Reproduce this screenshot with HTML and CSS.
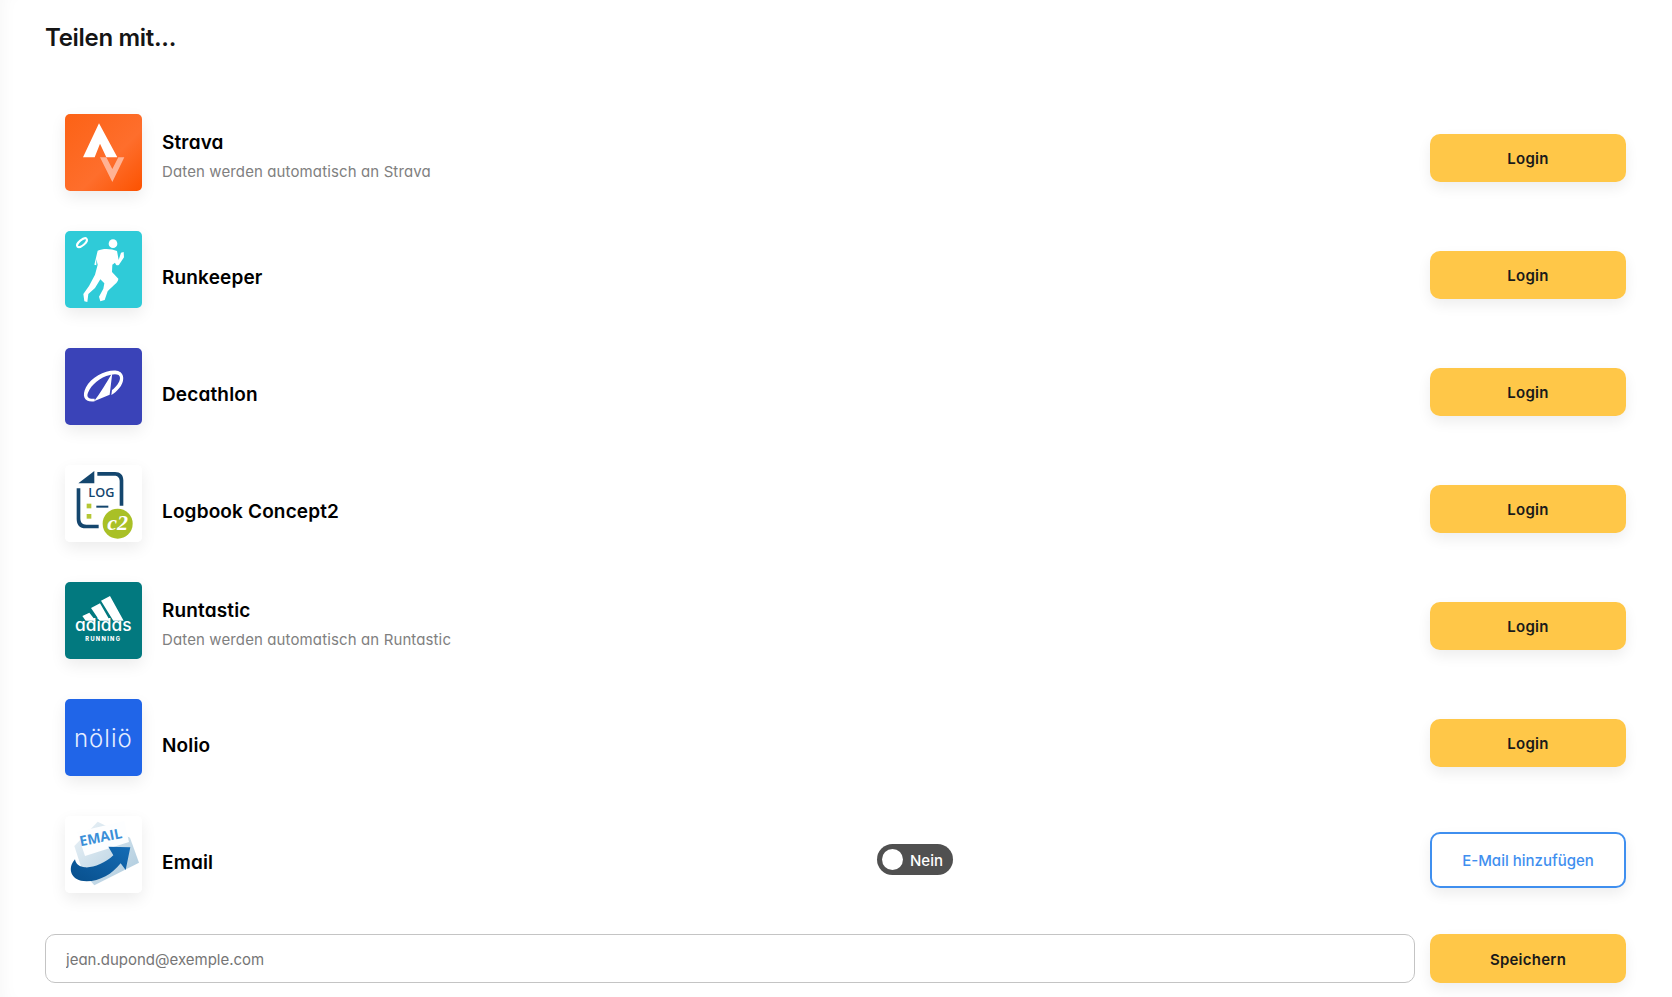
FILE: index.html
```html
<!DOCTYPE html>
<html lang="de">
<head>
<meta charset="utf-8">
<title>Teilen mit...</title>
<link rel="stylesheet" href="styles.css">
</head>
<body>
<main class="page">
  <h1 class="title">Teilen mit...</h1>
  <ul class="list">
    <li class="row">
      <div class="logo">
        <svg viewBox="30 27 231 231"><defs><linearGradient id="sg" x1="0" y1="0" x2="1" y2="1"><stop offset="0" stop-color="#fc6215"/><stop offset=".6" stop-color="#fe6e2c"/><stop offset="1" stop-color="#fc5200"/></linearGradient></defs><rect x="30" y="27" width="231" height="231" fill="url(#sg)"/><path d="M132 55L84 157H119L135 116L154 157H187Z" fill="#fff"/><path d="M135 157H154L172 192L190 157H208L172 231Z" fill="#ffb394"/></svg>
      </div>
      <div class="info"><div class="name">Strava</div><div class="desc">Daten werden automatisch an Strava</div></div>
      <button class="btn">Login</button>
    </li>
    <li class="row">
      <div class="logo">
        <svg viewBox="30 27 231 231"><rect x="30" y="27" width="231" height="231" fill="#2fcbd8"/><ellipse cx="81" cy="62" rx="18" ry="8" fill="none" stroke="#fff" stroke-width="6" transform="rotate(-40 81 62)"/><circle cx="174" cy="65" r="13" fill="#fff"/><path d="M128 86C145 78 170 80 186 87L191 114L198 92L206 90L207 106L192 128C187 133 182 128 180 122L172 128L171 150L190 170C190 182 174 190 158 208L149 234L136 238L132 224L145 200L148 184L136 172L120 198L100 216L97 240L88 238L85 216L102 192L120 158L128 128L124 112L124 130L118 128Z" fill="#fff"/></svg>
      </div>
      <div class="info info-single"><div class="name">Runkeeper</div></div>
      <button class="btn">Login</button>
    </li>
    <li class="row">
      <div class="logo">
        <svg viewBox="45 54 231 231"><rect x="45" y="54" width="231" height="231" fill="#3a43b8"/><path d="M134 214C104 218 94 200 108 172C124 140 170 118 200 122C226 126 224 156 208 174C200 184 192 191 184 195L186 180C198 172 210 156 210 144C210 132 196 131 180 135C150 142 124 164 114 188C108 202 118 208 134 206Z" fill="#fff"/><path d="M187 128L179 194L132 214C150 190 170 158 187 128Z" fill="#fff"/></svg>
      </div>
      <div class="info info-single"><div class="name">Decathlon</div></div>
      <button class="btn">Login</button>
    </li>
    <li class="row">
      <div class="logo">
        <svg viewBox="30 30 231 231"><rect x="30" y="30" width="231" height="231" fill="#fff"/><path d="M118 48V85H70Z" fill="#14466e"/><path d="M127 51H180C196 51 205 60 205 76V152H194V78C194 68 188 62 178 62H127ZM65 100H76V190C76 203 82 209 94 209H131V220H92C74 220 65 210 65 192Z" fill="#14466e"/><text x="100" y="125" class="log-text">LOG</text><rect x="95" y="146" width="14" height="14" fill="#b5c735"/><rect x="95" y="177" width="14" height="14" fill="#b5c735"/><rect x="124" y="152" width="36" height="6" fill="#14466e"/><circle cx="188" cy="206" r="45" fill="#a9c026"/><text x="188" y="226" class="c2-text">c2</text></svg>
      </div>
      <div class="info info-single"><div class="name">Logbook Concept2</div></div>
      <button class="btn">Login</button>
    </li>
    <li class="row">
      <div class="logo">
        <svg viewBox="30 30 231 231"><rect x="30" y="30" width="231" height="231" fill="#02797f"/><path d="M82 132L103 122L122 146H92ZM108 108L135 94L165 146H134ZM138 86L165 72L206 146H175Z" fill="#fff"/><text x="145" y="178" class="adidas-text">adidas</text><text x="145" y="208" class="running-text">RUNNING</text></svg>
      </div>
      <div class="info"><div class="name">Runtastic</div><div class="desc">Daten werden automatisch an Runtastic</div></div>
      <button class="btn">Login</button>
    </li>
    <li class="row">
      <div class="logo">
        <svg viewBox="45 57 231 231"><rect x="45" y="57" width="231" height="231" fill="#2065e8"/><text x="160" y="200" class="nolio-text">nöliö</text></svg>
      </div>
      <div class="info info-single"><div class="name">Nolio</div></div>
      <button class="btn">Login</button>
    </li>
    <li class="row">
      <div class="logo">
        <svg viewBox="30 30 231 231"><defs><linearGradient id="eg" x1="0" y1="0" x2="1" y2="1"><stop offset="0" stop-color="#eef4f8"/><stop offset="1" stop-color="#a9c8dc"/></linearGradient><linearGradient id="ag" x1="0" y1="1" x2="1" y2="0"><stop offset="0" stop-color="#084f8c"/><stop offset="1" stop-color="#156cb5"/></linearGradient></defs><rect x="30" y="30" width="231" height="231" fill="#fff"/><path d="M58 120L128 47L225 95L252 170L118 238L84 200Z" fill="url(#eg)"/><path d="M66 78L208 45L222 108L90 150Z" fill="#fdfeff"/><text x="140" y="108" class="email-text" transform="rotate(-11 140 108)">EMAIL</text><path d="M60 160C36 186 46 226 95 226C135 226 172 204 197 172L212 192L226 124L160 122L175 148C150 172 115 186 90 184C75 183 62 175 60 160Z" fill="url(#ag)"/></svg>
      </div>
      <div class="info info-single info-email"><div class="name">Email</div></div>
      <div class="toggle"><span class="knob"></span><span class="toggle-label">Nein</span></div>
      <button class="btn btn-outline">E-Mail hinzufügen</button>
    </li>
  </ul>
  <form class="email-form">
    <input class="input" type="text" placeholder="jean.dupond@exemple.com">
    <button class="btn btn-save" type="button">Speichern</button>
  </form>
</main>
</body>
</html>
```

FILE: styles.css
```css
* { box-sizing: border-box; }
html, body { margin: 0; padding: 0; height: 100%; }
body {
  background: #fff;
  color: #000;
  font-family: Inter, "Liberation Sans", sans-serif;
  font-feature-settings: "cv11" 1;
  overflow: hidden;
  box-shadow: inset 14px 0 18px -12px rgba(0, 0, 0, .04);
}
.page { padding: 0 46px 0 45px; }
.title {
  margin: 0;
  padding-top: 22px;
  height: 114px;
  font-size: 24px;
  line-height: 32px;
  font-weight: 600;
  letter-spacing: -.3px;
  color: #151515;
}
.list { list-style: none; margin: 0; padding: 0 0 0 20px; }
.row { display: flex; align-items: flex-start; height: 117px; }
.logo {
  flex: none;
  width: 77px;
  height: 77px;
  border-radius: 5px;
  overflow: hidden;
  box-shadow: 0 6px 16px rgba(0, 0, 0, .08);
  background: #fff;
}
.logo svg { display: block; width: 100%; height: 100%; }
.info { flex: 1; margin-left: 20px; padding-top: 16px; }
.info-single { padding-top: 34px; }
.info-email { flex: none; width: 715px; }
.name { font-size: 19px; line-height: 26px; font-weight: 600; letter-spacing: .15px; }
.desc { margin-top: 6px; font-size: 15px; line-height: 20px; letter-spacing: .12px; color: #808080; }
.btn {
  flex: none;
  width: 196px;
  height: 48px;
  margin-top: 20px;
  padding: 1px 0 0;
  border: 0;
  border-radius: 10px;
  background: #ffc748;
  color: #1a1a1a;
  font: inherit;
  font-feature-settings: inherit;
  font-size: 15px;
  font-weight: 600;
  letter-spacing: .25px;
  box-shadow: 0 6px 14px rgba(0, 0, 0, .07);
}
.btn-outline {
  height: 56px;
  margin-top: 16px;
  margin-left: auto;
  padding: 0;
  border: 2px solid #3f8fef;
  background: #fff;
  color: #3f8fef;
  font-weight: 500;
  letter-spacing: 0;
}
.toggle {
  flex: none;
  display: flex;
  align-items: center;
  width: 76px;
  height: 31px;
  margin-top: 28px;
  padding: 0 5px;
  border-radius: 16px;
  background: #505050;
}
.knob { width: 21px; height: 21px; border-radius: 50%; background: #fff; }
.toggle-label { margin-left: 7px; padding-top: 1px; font-size: 15px; font-weight: 500; color: #fff; }
.email-form { display: flex; gap: 15px; margin-top: 1px; }
.input {
  flex: 1;
  height: 49px;
  padding: 2px 20px 0;
  border: 1px solid #c4c4c4;
  border-radius: 10px;
  background: #fff;
  font: inherit;
  font-feature-settings: inherit;
  font-size: 15px;
  outline: 0;
}
.input::placeholder { color: #757575; opacity: 1; }
.btn-save { height: 49px; margin-top: 0; padding-top: 2px; }
.log-text { font-family: "Open Sans", sans-serif; font-size: 38px; font-weight: 600; fill: #14466e; }
.c2-text { font-family: "Liberation Serif", serif; font-size: 66px; font-style: italic; font-weight: 700; fill: #fff; text-anchor: middle; }
.adidas-text { font-family: Inter, sans-serif; font-size: 52px; font-weight: 500; fill: #fff; text-anchor: middle; letter-spacing: 0; }
.running-text { font-family: Inter, sans-serif; font-size: 17px; font-weight: 800; fill: #fff; text-anchor: middle; letter-spacing: 4px; }
.nolio-text { font-family: Inter, sans-serif; font-size: 72px; font-weight: 300; fill: #e6eeff; text-anchor: middle; letter-spacing: 3px; }
.email-text { font-family: "Open Sans", sans-serif; font-size: 42px; font-weight: 700; fill: #3a8fd8; text-anchor: middle; }
```
